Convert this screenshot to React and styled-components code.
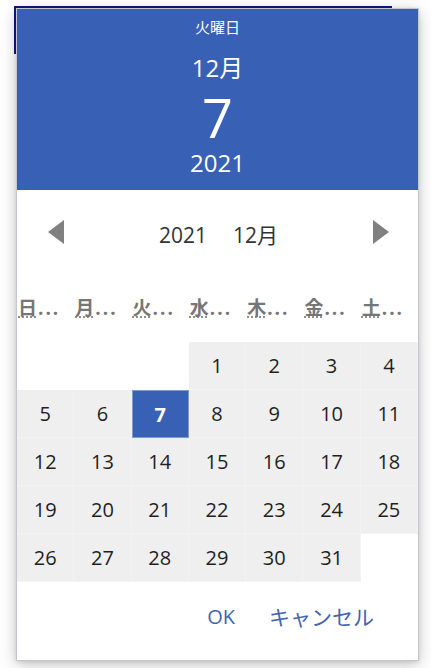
import React from "react";
import styled, { createGlobalStyle } from "styled-components";

const GlobalStyle = createGlobalStyle`
  html, body {
    margin: 0;
    padding: 0;
    background: #ffffff;
    font-family: "Open Sans", "Noto Sans CJK JP", sans-serif;
  }
  * { box-sizing: border-box; }
`;

const WEEKDAYS = ["日", "月", "火", "水", "木", "金", "土"];

const buildDays = () => {
  // December 2021 starts on a Wednesday
  const cells = [];
  for (let i = 0; i < 3; i++) cells.push(null);
  for (let d = 1; d <= 31; d++) cells.push(d);
  while (cells.length % 7 !== 0) cells.push(null);
  return cells;
};

const App = () => {
  const days = buildDays();
  const selected = 7;

  return (
    <>
      <GlobalStyle />
      <Page>
        <DateInput />
        <Popup>
          <Header>
            <DayName>火曜日</DayName>
            <HeaderMonth>12月</HeaderMonth>
            <HeaderDay>7</HeaderDay>
            <HeaderYear>2021</HeaderYear>
          </Header>

          <Nav>
            <Arrow aria-label="前の月">
              <svg width="16" height="24" viewBox="0 0 16 24">
                <polygon points="16,0 16,24 0,12" fill="#808080" />
              </svg>
            </Arrow>
            <NavTitle>
              <span>2021</span>
              <span>12月</span>
            </NavTitle>
            <Arrow aria-label="次の月">
              <svg width="16" height="24" viewBox="0 0 16 24">
                <polygon points="0,0 0,24 16,12" fill="#808080" />
              </svg>
            </Arrow>
          </Nav>

          <WeekRow>
            {WEEKDAYS.map((w) => (
              <WeekCell key={w}>
                <Abbr title={w + "曜日"}>{w}</Abbr>
                <Dots>...</Dots>
              </WeekCell>
            ))}
          </WeekRow>

          <DayGrid>
            {days.map((d, i) =>
              d === null ? (
                <Blank key={"b" + i} />
              ) : (
                <DayCell key={i} $selected={d === selected}>
                  {d}
                </DayCell>
              )
            )}
          </DayGrid>

          <Footer>
            <LinkButton>OK</LinkButton>
            <LinkButton>キャンセル</LinkButton>
          </Footer>
        </Popup>
      </Page>
    </>
  );
};

const Page = styled.div`
  position: relative;
  width: 431px;
  height: 668px;
  overflow: hidden;
  background: #ffffff;
`;

const DateInput = styled.div`
  margin: 6px 0 0 14px;
  width: 378px;
  height: 48px;
  border: 2px solid #0c1a7c;
`;

const Popup = styled.div`
  position: absolute;
  left: 16px;
  top: 8px;
  width: 403px;
  border: 1px solid #c4c7cf;
  background: #ffffff;
  box-shadow: 0 4px 16px rgba(0, 0, 0, 0.22), 0 1px 4px rgba(0, 0, 0, 0.12);
  display: flex;
  flex-direction: column;
`;

const Header = styled.div`
  height: 181px;
  background: #3861b5;
  color: #ffffff;
  display: flex;
  flex-direction: column;
  align-items: center;
  padding-top: 8px;
`;

const DayName = styled.div`
  font-size: 15px;
  line-height: 20px;
  height: 20px;
`;

const HeaderMonth = styled.div`
  margin-top: 15px;
  font-size: 24px;
  line-height: 32px;
  height: 32px;
`;

const HeaderDay = styled.div`
  margin-top: 5px;
  font-size: 54px;
  line-height: 56px;
  height: 56px;
`;

const HeaderYear = styled.div`
  margin-top: 2px;
  font-size: 24px;
  line-height: 32px;
  height: 32px;
`;

const Nav = styled.div`
  margin-top: 20px;
  height: 50px;
  display: flex;
  align-items: center;
  justify-content: space-between;
  padding: 0 29px 0 31px;
`;

const Arrow = styled.button`
  border: none;
  background: none;
  padding: 0;
  margin-top: -6px;
  width: 16px;
  height: 24px;
  display: flex;
  cursor: pointer;
`;

const NavTitle = styled.div`
  display: flex;
  gap: 26px;
  font-size: 21px;
  line-height: 28px;
  color: #333333;
`;

const WeekRow = styled.div`
  margin-top: 36px;
  height: 46px;
  display: grid;
  grid-template-columns: repeat(7, 1fr);
  align-items: start;
`;

const WeekCell = styled.div`
  padding-left: 1px;
  font-size: 19px;
  font-weight: 700;
  color: #767676;
  white-space: nowrap;
  line-height: 24px;
`;

const Abbr = styled.abbr`
  text-decoration: underline dotted #8a8a8a;
  text-underline-offset: 2px;
`;

const Dots = styled.span`
  letter-spacing: 2px;
  margin-left: 1px;
`;

const DayGrid = styled.div`
  display: grid;
  grid-template-columns: repeat(7, 1fr);
  grid-auto-rows: 48px;
`;

const Blank = styled.div`
  background: #ffffff;
`;

const DayCell = styled.div`
  display: flex;
  align-items: center;
  justify-content: center;
  font-size: 20px;
  background: ${(p) => (p.$selected ? "#3861b5" : "#efefef")};
  color: ${(p) => (p.$selected ? "#ffffff" : "#1f1f1f")};
  font-weight: ${(p) => (p.$selected ? 700 : 400)};
  border: 1px solid ${(p) => (p.$selected ? "#7f99d3" : "#f3f3f3")};
  border-width: ${(p) => (p.$selected ? "1px" : "0 1px 1px 0")};
`;

const Footer = styled.div`
  height: 78px;
  display: flex;
  justify-content: flex-end;
  align-items: flex-start;
  gap: 34px;
  padding: 21px 44px 0 0;
`;

const LinkButton = styled.button`
  border: none;
  background: none;
  padding: 0;
  font-family: "Open Sans", "Noto Sans CJK JP", sans-serif;
  font-size: 20px;
  line-height: 28px;
  color: #4463b0;
  cursor: pointer;

  &:last-child {
    font-size: 21px;
  }
`;

export default App;
